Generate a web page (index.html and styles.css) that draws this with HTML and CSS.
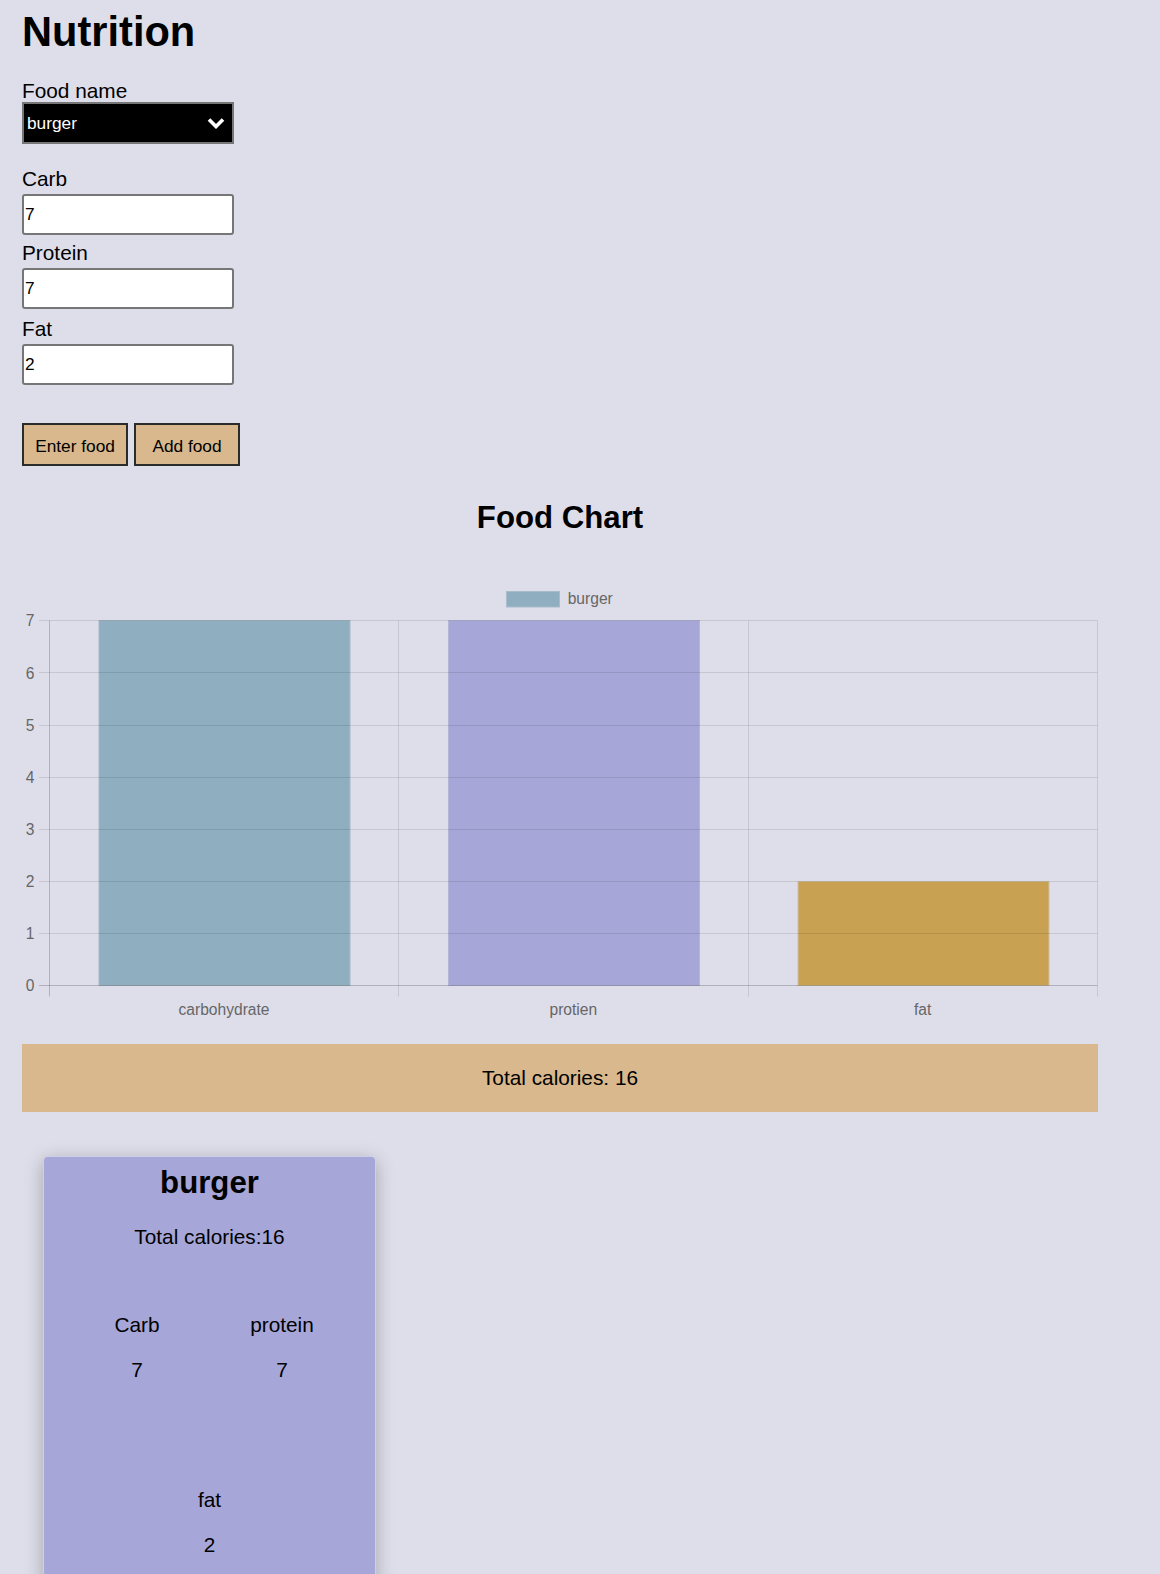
FILE: index.html
```html
<!DOCTYPE html>
<html lang="en">
<head>
<meta charset="utf-8">
<title>Nutrition</title>
<link rel="stylesheet" href="styles.css">
</head>
<body>
<div class="page">
  <h1 class="title">Nutrition</h1>
  <form class="food-form">
    <label class="field-label lbl-name" for="food">Food name</label>
    <div class="select-wrap">
      <select id="food" class="select"><option>burger</option></select>
      <svg class="chevron" width="18" height="12" viewBox="0 0 18 12"><polyline points="2,2.5 9,9.5 16,2.5" fill="none" stroke="#fff" stroke-width="3.6" stroke-linejoin="miter"/></svg>
    </div>
    <label class="field-label lbl-carb" for="carb">Carb</label>
    <input id="carb" class="num" type="text" value="7">
    <label class="field-label lbl-protein" for="protein">Protein</label>
    <input id="protein" class="num" type="text" value="7">
    <label class="field-label lbl-fat" for="fat">Fat</label>
    <input id="fat" class="num" type="text" value="2">
    <div class="buttons">
      <button type="button" class="btn">Enter food</button>
      <button type="button" class="btn">Add food</button>
    </div>
  </form>

  <h2 class="chart-title">Food Chart</h2>

  <svg class="chart" width="1076" height="460" viewBox="0 0 1076 460">
    <rect x="484.5" y="21.5" width="53" height="15.5" fill="#8fafc0" stroke="#a9bccb" stroke-width="1"/>
    <text class="legend-text" x="545.7" y="34.3">burger</text>

    <rect x="77" y="50.5" width="251" height="365" fill="#8fafc0" stroke="#a6b8c6" stroke-width="1"/>
    <rect x="426.5" y="50.5" width="251" height="365" fill="#a6a6d8" stroke="#b4b4d6" stroke-width="1"/>
    <rect x="776" y="311.5" width="251" height="104" fill="#c8a252" stroke="#cfc0a4" stroke-width="1"/>

    <g class="grid">
      <line x1="17" y1="50.5" x2="1075.5" y2="50.5"/>
      <line x1="17" y1="102.5" x2="1075.5" y2="102.5"/>
      <line x1="17" y1="155.5" x2="1075.5" y2="155.5"/>
      <line x1="17" y1="207.5" x2="1075.5" y2="207.5"/>
      <line x1="17" y1="259.5" x2="1075.5" y2="259.5"/>
      <line x1="17" y1="311.5" x2="1075.5" y2="311.5"/>
      <line x1="17" y1="363.5" x2="1075.5" y2="363.5"/>
      <line x1="376.5" y1="50.5" x2="376.5" y2="426.5"/>
      <line x1="726.5" y1="50.5" x2="726.5" y2="426.5"/>
      <line x1="1075.5" y1="50.5" x2="1075.5" y2="426.5"/>
    </g>
    <g class="axis">
      <line x1="17" y1="415.5" x2="1075.5" y2="415.5"/>
      <line x1="27.5" y1="50.5" x2="27.5" y2="426.5"/>
    </g>

    <g class="tick-y">
      <text x="12.5" y="56.3">7</text>
      <text x="12.5" y="108.5">6</text>
      <text x="12.5" y="160.6">5</text>
      <text x="12.5" y="212.7">4</text>
      <text x="12.5" y="264.9">3</text>
      <text x="12.5" y="317">2</text>
      <text x="12.5" y="369.2">1</text>
      <text x="12.5" y="421.3">0</text>
    </g>
    <g class="tick-x">
      <text x="202" y="445.3">carbohydrate</text>
      <text x="551.3" y="445.3">protien</text>
      <text x="900.6" y="445.3">fat</text>
    </g>
  </svg>

  <div class="total">Total calories: 16</div>

  <div class="card">
    <h2 class="card-title">burger</h2>
    <p class="card-total">Total calories:16</p>
    <div class="stats">
      <div class="stat"><p>Carb</p><p>7</p></div>
      <div class="stat"><p>protein</p><p>7</p></div>
      <div class="stat"><p>fat</p><p>2</p></div>
    </div>
  </div>
</div>
</body>
</html>
```

FILE: styles.css
```css
html {
  background: #dedeea;
}

body {
  margin: 0;
  padding: 8px 0 0 0;
  font-family: "Liberation Sans", Arial, Helvetica, sans-serif;
  color: #000;
}

.page {
  width: 1076px;
  margin-left: 22px;
}

.title {
  margin: 0;
  font-size: 41.6px;
  line-height: 48px;
  font-weight: bold;
}

.food-form {
  display: flex;
  flex-direction: column;
  align-items: flex-start;
}

.field-label {
  display: block;
  font-size: 20.8px;
  line-height: 23px;
}

.lbl-name { margin-top: 23px; }
.lbl-carb { margin-top: 23px; }
.lbl-protein { margin-top: 6px; }
.lbl-fat { margin-top: 8px; }

.select-wrap {
  position: relative;
  width: 212px;
  height: 42px;
}

.select {
  appearance: none;
  -webkit-appearance: none;
  box-sizing: border-box;
  width: 212px;
  height: 42px;
  margin: 0;
  padding: 0 30px 0 3px;
  background: #000;
  color: #fff;
  border: 2px solid #767676;
  border-radius: 0;
  font-family: "Liberation Sans", Arial, sans-serif;
  font-size: 17.3px;
}

.chevron {
  position: absolute;
  left: 185px;
  top: 15px;
  pointer-events: none;
}

.num {
  box-sizing: border-box;
  width: 212px;
  height: 41px;
  margin: 4px 0 0 0;
  padding: 0 1px;
  background: #fff;
  border: 2px solid #767676;
  border-radius: 3px;
  font-family: "Liberation Sans", Arial, sans-serif;
  font-size: 17.3px;
  color: #000;
}

.buttons {
  display: flex;
  gap: 6px;
  margin-top: 38px;
}

.btn {
  box-sizing: border-box;
  width: 106px;
  height: 43px;
  margin: 0;
  padding: 3px 0 0 0;
  background: #d8b88c;
  border: 2px solid #2b2b2b;
  border-radius: 0;
  font-family: "Liberation Sans", Arial, sans-serif;
  font-size: 17.3px;
  color: #000;
}

.chart-title {
  margin: 34px 0 0 0;
  font-size: 31.2px;
  line-height: 36px;
  font-weight: bold;
  text-align: center;
}

.chart {
  display: block;
  margin-top: 34px;
  font-family: "Liberation Sans", Arial, sans-serif;
}

.legend-text {
  font-size: 15.6px;
  fill: #666;
}

.grid line {
  stroke: rgba(0, 0, 0, 0.1);
  stroke-width: 1;
}

.axis line {
  stroke: rgba(0, 0, 0, 0.2);
  stroke-width: 1;
}

.tick-y text {
  font-size: 15.6px;
  fill: #666;
  text-anchor: end;
}

.tick-x text {
  font-size: 15.6px;
  fill: #666;
  text-anchor: middle;
}

.total {
  display: flex;
  align-items: center;
  justify-content: center;
  height: 68px;
  margin-top: 14px;
  background: #d8b88c;
  font-size: 20.8px;
  line-height: 24px;
}

.card {
  box-sizing: border-box;
  width: 333px;
  margin: 44px 0 0 21px;
  padding: 8px 0 0 0;
  background: #a6a6d8;
  border: 1px solid rgba(255, 255, 255, 0.45);
  border-radius: 5px;
  box-shadow: 0 4px 18px rgba(0, 0, 0, 0.26);
  text-align: center;
}

.card-title {
  margin: 0;
  font-size: 31.2px;
  line-height: 36px;
  font-weight: bold;
}

.card-total {
  margin: 24px 0 0 0;
  font-size: 20.8px;
  line-height: 24px;
}

.stats {
  display: flex;
  flex-wrap: wrap;
  justify-content: center;
  margin-top: 11px;
}

.stat {
  width: 145px;
  padding: 32px 0;
}

.stat p {
  margin: 21px 0;
  font-size: 20.8px;
  line-height: 24px;
}
```
